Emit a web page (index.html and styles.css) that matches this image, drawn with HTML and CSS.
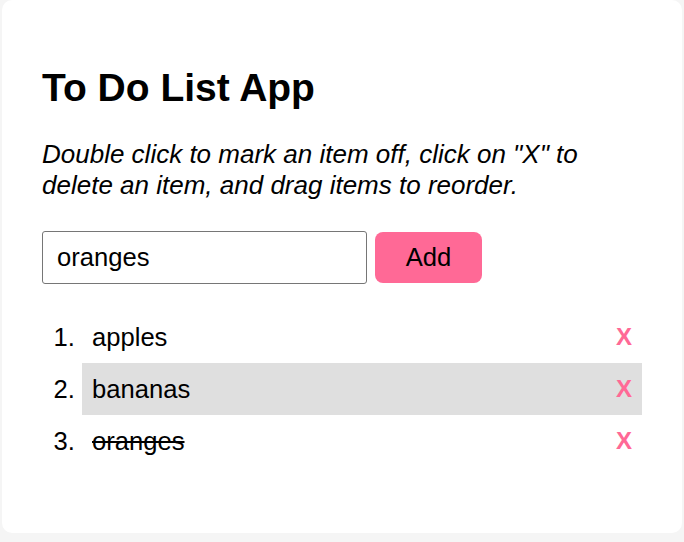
FILE: index.html
```html
<!DOCTYPE html>
<html>
<head>
<meta charset="utf-8">
<link rel="stylesheet" href="styles.css">
</head>
<body>
<main class="card">
  <h1 class="title">To Do List App</h1>
  <p class="hint">Double click to mark an item off, click on "X" to delete an item, and drag items to reorder.</p>
  <form class="add-form">
    <input class="add-input" type="text" value="oranges">
    <button class="add-btn" type="button">Add</button>
  </form>
  <ol class="todo-list">
    <li class="todo"><span class="todo-text">apples</span><span class="del">X</span></li>
    <li class="todo todo-hover"><span class="todo-text">bananas</span><span class="del">X</span></li>
    <li class="todo done"><span class="todo-text">oranges</span><span class="del">X</span></li>
  </ol>
</main>
</body>
</html>
```

FILE: styles.css
```css
html, body {
  margin: 0;
  padding: 0;
  background: #f5f5f5;
  font-family: "Liberation Sans", Arial, Helvetica, sans-serif;
  color: #000;
}
body {
  padding: 0 2px;
}
.card {
  width: 680px;
  box-sizing: border-box;
  background: #fff;
  border-radius: 10px;
  padding: 40px 40px 40px;
  min-height: 533px;
}
.title {
  font-size: 39px;
  font-weight: bold;
  margin: 26px 0 0;
  line-height: 1.149;
}
.hint {
  font-size: 26px;
  font-style: italic;
  line-height: 31px;
  margin: 28px 0 0;
}
.add-form {
  display: flex;
  gap: 8px;
  align-items: center;
  margin-top: 30px;
}
.add-input {
  width: 325px;
  height: 53px;
  box-sizing: border-box;
  border: 1px solid #767676;
  border-radius: 3px;
  padding: 0 14px;
  font-family: "Liberation Sans", Arial, sans-serif;
  font-size: 25.6px;
  color: #000;
  outline: none;
}
.add-btn {
  width: 107px;
  height: 51px;
  border: none;
  border-radius: 8px;
  background: #ff6996;
  font-family: "Liberation Sans", Arial, sans-serif;
  font-size: 25.6px;
  color: #000;
  padding: 0;
}
.todo-list {
  margin: 27px 0 0;
  padding-left: 40px;
  font-size: 25.6px;
}
.todo {
  padding: 10px 10px;
  line-height: 32px;
}
.todo-text {
  display: inline-block;
}
.todo-hover {
  background: #dfdfdf;
}
.done .todo-text {
  text-decoration: line-through;
}
.del {
  float: right;
  color: #ff6996;
  font-weight: bold;
  font-size: 24px;
  line-height: 32px;
}
```
